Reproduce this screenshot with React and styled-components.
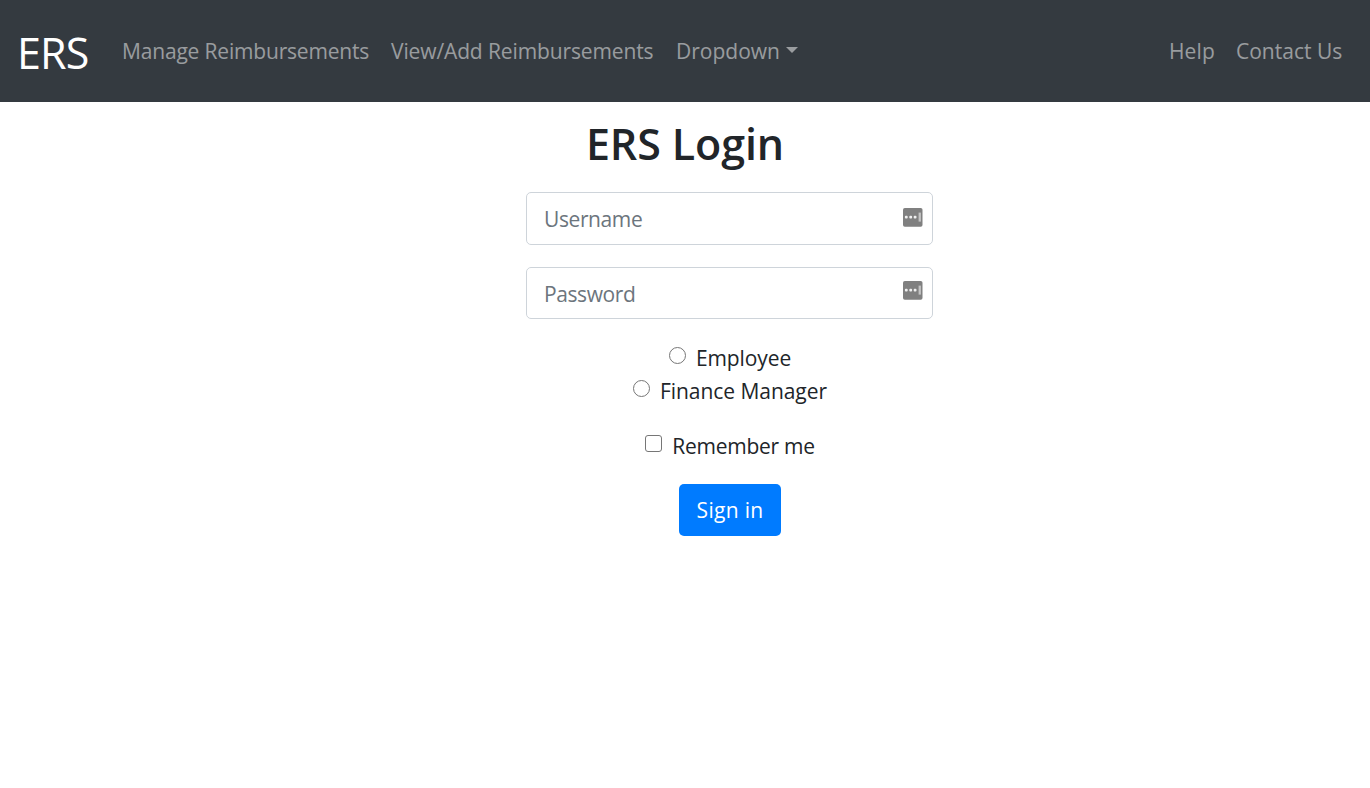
import React from "react";
import styled, { createGlobalStyle } from "styled-components";

const GlobalStyle = createGlobalStyle`
  *, *::before, *::after { box-sizing: border-box; }
  body {
    margin: 0;
    background: #fff;
    color: #212529;
    font-family: "Open Sans", "Noto Sans", sans-serif;
    font-size: 21px;
    line-height: 33px;
  }
`;

const Navbar = styled.nav`
  display: flex;
  align-items: flex-start;
  height: 102px;
  padding: 18px 16px 0 17px;
  background: #343a40;
`;

const Brand = styled.a`
  width: 70px;
  margin-right: 24px;
  padding-top: 2px;
  color: #fff;
  font-size: 43px;
  line-height: 66px;
  letter-spacing: -0.8px;
  white-space: nowrap;
`;

const NavList = styled.div`
  display: flex;
  margin-left: ${(p) => (p.$end ? "auto" : 0)};
  padding-top: 17px;
`;

const NavLink = styled.a`
  display: flex;
  align-items: center;
  width: ${(p) => p.$width}px;
  padding-left: 11px;
  color: rgba(255, 255, 255, 0.5);
  letter-spacing: ${(p) => p.$tracking || 0}px;
  white-space: nowrap;
`;

const Caret = styled.span`
  margin: -3px 0 0 6px;
  border: 6.5px solid transparent;
  border-top-color: currentColor;
  border-bottom: 0;
`;

const Title = styled.h1`
  margin: 11px 0 0;
  font-size: 43px;
  font-weight: 600;
  line-height: 62px;
  letter-spacing: -0.1px;
  text-align: center;
`;

const Form = styled.form`
  display: flex;
  flex-direction: column;
  align-items: center;
  width: 407px;
  margin: 17px 0 0 526px;
`;

const Field = styled.div`
  display: flex;
  align-items: center;
  width: 100%;
  height: ${(p) => p.$height}px;
  margin-bottom: 22px;
  padding: 0 9px 0 17px;
  border: 1px solid #ced4da;
  border-radius: 5px;
`;

const Input = styled.input`
  flex: 1;
  min-width: 0;
  height: 33px;
  margin-top: 2px;
  padding: 0;
  border: 0;
  outline: 0;
  background: transparent;
  font: inherit;
  letter-spacing: -0.4px;
  &::placeholder { color: #6c757d; opacity: 1; }
`;

const KeyIcon = styled.svg`
  display: block;
  width: 20px;
  height: 20px;
  margin-top: ${(p) => p.$lift}px;
`;

const Choice = styled.label`
  display: flex;
  align-items: flex-start;
  height: 33px;
  margin-top: ${(p) => p.$gap || 0}px;
  padding-left: 1px;
  line-height: 35px;
  letter-spacing: ${(p) => p.$tracking || 0}px;
  white-space: nowrap;
`;

const Toggle = styled.input`
  appearance: none;
  width: 17px;
  height: 17px;
  margin: 6px 10px 0 0;
  border: 1px solid #767676;
  border-radius: ${(p) => (p.type === "radio" ? "50%" : "3px")};
  background: #fff;
`;

const SubmitButton = styled.button`
  width: 102px;
  height: 52px;
  margin-top: 22px;
  padding: 0 0 0 1px;
  border: 0;
  border-radius: 5px;
  background: #007bff;
  color: #fff;
  font: inherit;
  letter-spacing: 0.3px;
`;

function PasswordManagerIcon({ lift }) {
  return (
    <KeyIcon viewBox="0 0 20 20" $lift={lift}>
      <rect x="0" y="1" width="19.5" height="18.8" rx="1.8" fill="#808080" />
      <rect x="1.9" y="8.8" width="2.8" height="2.8" rx="1" fill="#f0f0f0" />
      <rect x="6.3" y="8.8" width="2.8" height="2.8" rx="1" fill="#f0f0f0" />
      <rect x="10.7" y="8.8" width="2.8" height="2.8" rx="1" fill="#f0f0f0" />
      <rect x="15.6" y="5.6" width="2.3" height="9" fill="#c4c4c4" />
    </KeyIcon>
  );
}

export default function App() {
  return (
    <>
      <GlobalStyle />
      <Navbar>
        <Brand>ERS</Brand>
        <NavList>
          <NavLink $width={269} $tracking={-0.18}>Manage Reimbursements</NavLink>
          <NavLink $width={285} $tracking={-0.12}>View/Add Reimbursements</NavLink>
          <NavLink $width={146}>Dropdown<Caret /></NavLink>
        </NavList>
        <NavList $end>
          <NavLink $width={67} $tracking={0.1}>Help</NavLink>
          <NavLink $width={129}>Contact Us</NavLink>
        </NavList>
      </Navbar>
      <Title>ERS Login</Title>
      <Form>
        <Field $height={53}><Input placeholder="Username" /><PasswordManagerIcon lift={-3} /></Field>
        <Field $height={52}><Input type="text" placeholder="Password" /><PasswordManagerIcon lift={-6} /></Field>
        <Choice $tracking={-0.1}><Toggle type="radio" name="role" />Employee</Choice>
        <Choice $tracking={-0.05}><Toggle type="radio" name="role" />Finance Manager</Choice>
        <Choice $gap={22} $tracking={-0.25}><Toggle type="checkbox" />Remember me</Choice>
        <SubmitButton type="button">Sign in</SubmitButton>
      </Form>
    </>
  );
}
